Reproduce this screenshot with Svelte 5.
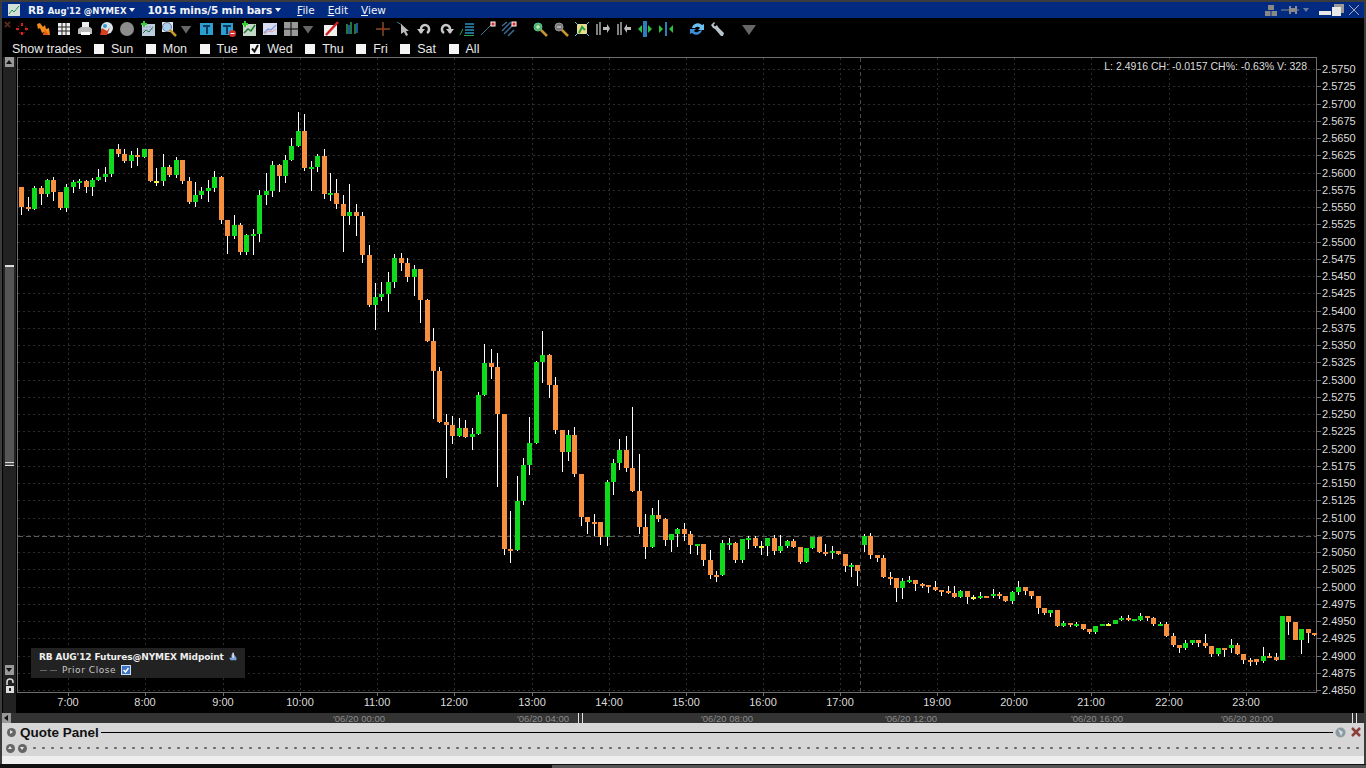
<script>
	// candles: colour, body top, body bottom, wick top, wick bottom (page pixels)
	const raw = `o,187,207,187,215 o,207,209,197,211 g,188,209,186,210 o,188,194,186,205 g,180,194,179,197 o,180,192,177,201 o,192,208,192,210 g,187,208,184,212 g,182,187,180,193 g,181,183,179,189
o,181,187,180,193 g,180,187,178,196 g,177,180,169,181 g,174,177,167,182 g,149,174,149,177 o,149,154,144,157 o,154,161,149,163 g,155,161,151,168 o,155,157,148,166 g,149,157,149,158
o,149,181,149,182 y,181,183,168,186 g,167,181,154,186 o,167,175,165,177 g,160,175,157,178 o,160,181,160,184 o,181,202,177,204 g,195,202,182,207 g,191,195,187,199 g,188,191,180,202
g,177,188,171,192 o,177,220,176,224 o,220,236,220,254 g,225,236,215,239 o,225,252,223,255 g,235,252,234,255 g,234,236,229,255 g,195,234,190,242 g,191,195,173,205 g,165,191,161,197
o,165,176,164,192 g,160,176,155,183 g,146,160,138,161 g,131,146,112,147 o,131,168,114,171 g,167,169,161,191 g,156,167,154,172 o,156,194,149,199 g,193,195,173,201 o,193,204,179,209
o,204,216,195,252 g,212,216,184,225 o,212,216,204,236 o,216,255,212,263 o,255,305,245,307 g,297,305,283,330 g,294,297,282,301 g,282,294,272,312 g,258,282,254,288 o,258,263,253,271
o,263,277,258,282 g,269,277,265,296 o,269,300,269,323 o,300,341,299,342 o,341,371,328,419 o,371,422,367,423 o,422,425,414,478 o,425,436,416,444 g,428,436,418,437 o,428,437,420,438
g,434,437,428,450 g,395,434,392,435 g,363,395,344,396 o,363,367,349,379 o,367,414,353,487 o,414,549,414,555 o,549,551,511,563 g,501,550,476,551 g,465,501,458,505 g,443,465,417,475
g,362,443,361,444 g,355,362,331,383 o,355,385,354,398 o,385,430,377,434 o,430,452,430,472 g,435,452,430,461 o,435,474,427,477 o,474,517,474,526 o,517,522,517,534 o,522,524,514,536
o,522,537,522,545 g,482,537,480,546 g,463,482,459,495 g,450,463,439,470 o,450,468,436,472 o,468,491,407,492 o,491,527,454,534 o,527,547,514,559 g,515,547,508,548 o,515,519,500,522
o,519,540,518,546 g,534,540,534,552 g,529,534,528,547 o,529,534,523,541 o,534,545,531,554 g,544,546,544,555 o,544,560,544,566 o,560,575,550,579 o,575,577,571,582 g,543,575,540,576
g,543,545,538,550 o,543,560,542,563 g,539,560,539,563 g,538,540,536,549 o,538,546,536,548 y,546,548,541,555 g,538,546,538,556 o,538,551,535,555 g,546,551,535,553 g,541,546,540,548
o,541,547,539,548 o,547,562,547,564 g,548,562,548,563 g,537,548,537,549 o,537,552,537,553 o,552,554,544,556 g,551,553,546,559 o,551,554,551,555 o,554,566,554,572 g,565,567,563,577
o,565,571,565,586 g,536,545,534,552 o,536,555,533,559 o,555,558,555,562 o,558,577,555,578 o,577,579,572,585 o,578,588,578,602 g,581,588,578,599 g,580,582,576,583 o,580,584,580,591
o,584,586,583,588 o,585,587,585,593 o,587,590,581,591 o,590,592,590,596 o,591,593,586,594 o,593,597,586,598 g,591,597,590,598 o,591,597,591,604 y,597,599,595,600 g,596,598,592,599
o,596,598,596,598 g,594,596,589,598 o,594,596,592,599 o,596,601,596,602 g,592,601,591,604 g,587,592,581,595 o,587,591,587,595 o,591,596,591,599 o,596,608,596,614 o,608,613,608,615
g,610,613,610,617 o,610,626,610,627 g,623,626,621,627 o,623,625,623,627 g,624,626,622,627 o,624,629,624,630 o,629,632,629,634 g,626,632,626,634 g,624,626,624,626 y,624,626,623,626
g,620,624,620,624 g,618,620,616,621 o,618,620,615,621 g,619,621,619,621 g,616,620,613,621 o,616,618,616,621 o,618,624,617,626 g,624,626,622,626 o,624,636,622,637 o,636,645,633,647
o,645,648,645,653 g,643,648,640,650 g,640,643,640,645 o,640,643,640,647 o,643,646,634,648 o,646,654,646,657 g,648,654,648,656 o,648,650,648,657 g,645,648,639,653 o,645,654,643,655
o,654,660,654,664 o,660,662,658,666 o,659,662,659,665 g,656,661,647,663 o,656,658,653,658 o,657,660,653,661 g,616,660,616,660 o,616,622,616,635 o,622,640,622,640 g,629,640,629,654
o,629,633,629,643 o,633,635,633,636`;

	const colors = { o: '#f6903f', g: '#0fdb1c', y: '#f2f04a' };
	const candles = raw.trim().split(/\s+/).map((s, i) => {
		const p = s.split(',');
		return {
			x: Math.round(21.3 + i * 6.432) - 2,
			color: colors[p[0]],
			top: +p[1],
			bottom: +p[2],
			wickTop: +p[3],
			wickBottom: +p[4]
		};
	});

	const prices = [];
	for (let i = 0; i <= 36; i++) prices.push({ label: (2.575 - i * 0.0025).toFixed(4), y: Math.round(69 + i * 17.25) });

	const hours = [
		['7:00', 68], ['8:00', 145], ['9:00', 223], ['10:00', 300], ['11:00', 377], ['12:00', 454], ['13:00', 532],
		['14:00', 609], ['15:00', 686], ['16:00', 763], ['17:00', 840], ['19:00', 937], ['20:00', 1014],
		['21:00', 1091], ['22:00', 1169], ['23:00', 1246]
	];

	const days = [
		{ name: 'Sun' }, { name: 'Mon' }, { name: 'Tue' }, { name: 'Wed', on: true },
		{ name: 'Thu' }, { name: 'Fri' }, { name: 'Sat' }, { name: 'All' }
	];

	const dates = ['06/20 00:00', '06/20 04:00', '06/20 08:00', '06/20 12:00', '06/20 16:00', '06/20 20:00'];

	const tri = '<path d="M1 4h14l-7 10z" fill="#666"/>';
	const tools = [
		{ c: 'xmark', s: '<path d="M1 1l6 6M7 1l-6 6" stroke="#5a2a20" stroke-width="2"/>' },
		{ s: '<path d="M8 2v3M8 11v3M2 8h3M11 8h3" stroke="#d22" stroke-width="2"/><circle cx="8" cy="8" r="4.5" fill="none" stroke="#922" stroke-dasharray="2 2"/>' },
		{ s: '<path d="M2 3l3-1 3 4 2-2 1 4 3-1 1 7H8l1-3-2 1-2-5-2 1z" fill="#f58a1f"/><path d="M10 9l4 5H8z" fill="#e65a10"/>' },
		{ s: '<rect x="2" y="2" width="12" height="12" fill="#eee"/><path d="M6 2v12M10 2v12M2 6h12M2 10h12" stroke="#222"/>' },
		{ s: '<rect x="5" y="1" width="7" height="6" fill="#eee"/><path d="M1 8l3-2h9l2 2v5H1z" fill="#bbb"/><rect x="4" y="11" width="9" height="3" fill="#fff"/>' },
		{ s: '<circle cx="9" cy="7" r="6" fill="#d8e4ec"/><path d="M2 14l2-7 5 3 3-4-3 8z" fill="#d8401c"/><circle cx="7" cy="5" r="2" fill="#39c"/>' },
		{ s: '<circle cx="8" cy="8" r="7" fill="#8c8c8c"/>' },
		{ s: '<rect x="2" y="3" width="13" height="12" fill="#bcd"/><path d="M3 12l3-3 3 2 4-5" stroke="#264" fill="none"/><path d="M4 0v6M1 3h6" stroke="#3c3" stroke-width="2"/><path d="M3 6h10M3 9h10" stroke="#8ab" stroke-dasharray="2 1"/>' },
		{ s: '<rect x="1" y="1" width="11" height="10" fill="#dbe8f5"/><circle cx="6" cy="6" r="4.5" fill="#a8d0f0" stroke="#778"/><path d="M9 9l6 6" stroke="#c8942c" stroke-width="2.5"/>' },
		{ c: 'tri', s: tri },
		{ s: '<rect x="1" y="2" width="13" height="12" fill="#2c9fd0"/><path d="M4 4h7v2H9v7H7V6H4z" fill="#0b3a5c"/>' },
		{ s: '<rect x="1" y="2" width="12" height="12" fill="#2c9fd0"/><path d="M3 4h8v2H8v7H6V6H3z" fill="#0b3a5c"/><circle cx="12.500" cy="12.500" r="3.5" fill="#d6322c"/><path d="M10.500 12.500h4" stroke="#fff"/>' },
		{ s: '<rect x="2" y="3" width="13" height="12" fill="#c4d8c8"/><path d="M3 12l4-4 3 2 4-6" stroke="#273" stroke-width="1.5" fill="none"/><path d="M4 0v6M1 3h6" stroke="#3c3" stroke-width="2"/>' },
		{ s: '<rect x="1" y="2" width="14" height="12" fill="#d8dcf0"/><path d="M2 12l4-4 3 1 5-5" stroke="#88a0e0" stroke-width="1.5" fill="none"/><path d="M2 13l5-3 3 1 4-3" stroke="#e8a0a0" fill="none"/>' },
		{ s: '<path d="M1 1h6.500v6.500H1zM8.500 1H15v6.500H8.500zM1 8.500h6.500V15H1zM8.500 8.500H15V15H8.500z" fill="#999"/>' },
		{ c: 'tri', s: tri },
		{ c: 'nudge', s: '<rect x="1" y="4" width="13" height="11" fill="#f0f0f0"/><path d="M3 14L15 1" stroke="#d02020" stroke-width="2.5"/>' },
		{ s: '<path d="M3 3v10M7 1v12M11 3v10" stroke="#2c9f50" stroke-width="1.5"/><path d="M5 4v9M13 2v10" stroke="#2c6cd0" stroke-width="1.5"/>' },
		{ c: 'wide', s: '<path d="M8 1v14M1 8h14" stroke="#5c3c1c" stroke-width="2"/><path d="M6 8h4M8 6v4" stroke="#8c2c1c" stroke-width="2"/>' },
		{ s: '<path d="M1 1l5 3" stroke="#4c7c90"/><path d="M5 3v10l3-2 2 4 2-1-2-4h3z" fill="#bbb"/>' },
		{ s: '<path d="M4 12V8a4 4 0 0 1 8 0 4 4 0 0 1-2 4" stroke="#c8c8c8" stroke-width="2.500" fill="none"/><path d="M0 8l4 5 4-5z" fill="#c8c8c8"/>' },
		{ s: '<path d="M12 12V8a4 4 0 0 0-8 0 4 4 0 0 0 2 4" stroke="#c8c8c8" stroke-width="2.500" fill="none"/><path d="M16 8l-4 5-4-5z" fill="#c8c8c8"/>' },
		{ s: '<path d="M1 14l3-6" stroke="#2c9f50"/><path d="M6 3h9M6 6h9M6 9h9M6 12h9" stroke="#2c8fc0" stroke-width="1.5"/><path d="M5 14.500h10" stroke="#2c9f50"/>' },
		{ s: '<path d="M1 14L12 3" stroke="#46708c"/><rect x="11" y="1" width="4" height="4" fill="#e02c2c" stroke="#fff"/>' },
		{ s: '<path d="M1 5l5-4M1 10l9-9M3 13l9-9M7 15l6-6" stroke="#3c6c94" stroke-width="1.5"/><rect x="11" y="1" width="4" height="4" fill="#e02c2c" stroke="#fff"/>' },
		{ c: 'wide', s: '<circle cx="6" cy="6" r="4" fill="#5cac6c" stroke="#4c8"/><path d="M4 6h4M6 4v4" stroke="#dfd"/><path d="M9 9l6 6" stroke="#c8942c" stroke-width="2.5"/>' },
		{ s: '<circle cx="6" cy="6" r="4" fill="#777" stroke="#999"/><path d="M4 6h4" stroke="#eee"/><path d="M9 9l6 6" stroke="#c8942c" stroke-width="2.5"/>' },
		{ s: '<rect x="3" y="3" width="10" height="10" fill="#e8dc8c"/><path d="M5 12l3-6 3 3" stroke="#2c9f40" stroke-width="2" fill="none"/><path d="M1 1l3 3M15 1l-3 3M1 15l3-3M15 15l-3-3" stroke="#6cc0e0"/>' },
		{ s: '<path d="M2 3v11M5 1v13" stroke="#aaa" stroke-width="1.5"/><path d="M8 6h4V3l3 4.500-3 4.500V9H8z" fill="#bbb"/>' },
		{ s: '<path d="M2 3v11M5 1v13" stroke="#aaa" stroke-width="1.500"/><path d="M15 6h-4V3L8 7.500l3 4.500V9h4z" fill="#bbb"/>' },
		{ s: '<rect x="6" y="0" width="4" height="16" fill="#2c7cc0"/><path d="M5 4v8L1 8zM11 4v8l4-4z" fill="#2cc040"/>' },
		{ s: '<rect x="7" y="1" width="2" height="14" fill="#2c7cc0"/><path d="M1 4v8l4-4zM15 4v8l-4-4z" fill="#2cc040"/>' },
		{ c: 'wide', s: '<path d="M3 7a6 6 0 0 1 10-3l2-1v6h-6l2-2a3 3 0 0 0-5 0z" fill="#6cc0f0"/><path d="M13 9a6 6 0 0 1-10 3l-2 1V8h6l-2 2a3 3 0 0 0 5 0z" fill="#3c8cdc"/>' },
		{ s: '<path d="M1 4l3-3 1 1-1.500 2L5 5.500 7 4l1 2 6 6-1 3h-2L5 8 3 7z" fill="#b8c4cc"/>' },
		{ c: 'wide', s: tri }
	];
</script>

<div class="window">
	<header class="titlebar">
		<svg class="logo" viewBox="0 0 12 12"><rect width="12" height="12" fill="#cfe0d8" /><path d="M1 10l3-4 2 2 5-6" stroke="#2c8f50" fill="none" /></svg>
		<span class="symbol">RB <small>Aug'12 @NYMEX</small></span>
		<span class="caret"></span>
		<span class="period">1015 mins/5 min bars</span>
		<span class="caret"></span>
		<nav>
			<span><u>F</u>ile</span>
			<span><u>E</u>dit</span>
			<span><u>V</u>iew</span>
		</nav>
		<div class="winctl">
			<svg width="12" height="13" viewBox="0 0 12 13"><path d="M3 1h6v5H3zM0 7h5.500v5H0zM6.500 7H12v5H6.500z" fill="#888" /></svg>
			<svg width="18" height="8" viewBox="0 0 18 8"><path d="M0 4h8M16 4h2" stroke="#8a8a8a" /><path d="M8 0h2v2h4V0h2v8h-2V6h-4v2H8z" fill="#8a8a8a" /></svg>
			<svg class="pinarrow" width="6" height="4" viewBox="0 0 6 4"><path d="M0 0h6L3 4z" fill="#6a7a9a" /></svg>
			<svg class="min" width="12" height="4" viewBox="0 0 12 4"><rect width="12" height="4" fill="#e8e8e8" /></svg>
			<svg width="12" height="12" viewBox="0 0 12 12"><rect x="2" width="10" height="9" fill="#999" /><rect y="3" width="9" height="9" fill="#e8e8e8" /></svg>
			<svg class="close" width="10" height="10" viewBox="0 0 10 10"><path d="M0 0l10 10M10 0L0 10" stroke="#aab" /></svg>
		</div>
	</header>

	<div class="toolbar">
		{#each tools as t}
			<svg class="tool {t.c ?? ''}" viewBox={t.c === 'xmark' ? '0 0 8 8' : '0 0 16 16'}>{@html t.s}</svg>
		{/each}
	</div>

	<div class="trades">
		<span class="trades-label">Show trades</span>
		{#each days as d}
			<label class="day">
				<span class="box">
					{#if d.on}
						<svg viewBox="0 0 10 10"><path d="M2 4.500l2.500 3L8 1" stroke="#111" stroke-width="2" fill="none" /></svg>
					{/if}
				</span>
				{d.name}
			</label>
		{/each}
	</div>

	<div class="main">
		<aside class="vscroll">
			<span class="sbtn up"></span>
			<div class="track"><div class="thumb"></div></div>
			<span class="sbtn down"></span>
			<svg class="lock" width="10" height="15" viewBox="0 0 10 15">
				<path d="M2 7V4a3 3 0 0 1 6 0v1" stroke="#ddd" stroke-width="1.500" fill="none" />
				<rect x="1" y="8" width="8" height="7" fill="#ddd" />
				<rect x="4" y="10" width="2" height="3" fill="#222" />
			</svg>
		</aside>

		<div class="chart">
			<svg class="plot" width="1347" height="656" viewBox="17 57 1347 656" shape-rendering="crispEdges">
				{#each prices as p}
					<line x1="18" x2="1317" y1={p.y + 0.5} y2={p.y + 0.5} class="grid" />
					<line x1="1317" x2="1321" y1={p.y + 0.5} y2={p.y + 0.5} class="frame" />
				{/each}
				{#each hours as h}
					<line x1={h[1] + 0.5} x2={h[1] + 0.5} y1="58" y2="692" class="grid" />
					<line x1={h[1] + 0.5} x2={h[1] + 0.5} y1="692" y2="696" class="frame" />
				{/each}
				<line x1="18" x2="1317" y1="536.500" y2="536.500" class="prior" />
				<line x1="860.500" x2="860.500" y1="58" y2="692" class="cross" />
				<path d="M17.500 692.500V57.500H1316.500V692.500Z" class="border" />

				{#each candles as c}
					<rect x={c.x + 2} y={c.wickTop} width="1" height={c.wickBottom - c.wickTop} fill="#fff" />
					<rect x={c.x} y={c.top} width="5" height={c.bottom - c.top} fill={c.color} />
				{/each}

				{#each prices as p}
					<text x="1322" y={p.y + 4} class="axis">{p.label}</text>
				{/each}
				{#each hours as h}
					<text x={h[1]} y="706" text-anchor="middle" class="axis">{h[0]}</text>
				{/each}
			</svg>

			<div class="info">L: 2.4916 CH: -0.0157 CH%: -0.63% V: 328</div>

			<div class="legend">
				<div class="legend-title">RB AUG'12 Futures@NYMEX Midpoint
					<svg width="10" height="10" viewBox="0 0 10 10"><path d="M3 2h3l3 4v3H2L0 6h3z" fill="#7ca4d8" /><path d="M4 0h2v6H4z" fill="#dde" /></svg>
				</div>
				<div class="legend-row">
					<span class="dash"></span>
					<span>Prior Close</span>
					<span class="legend-check"><svg viewBox="0 0 8 8"><path d="M1.500 4l2 2 3-4" stroke="#fff" stroke-width="1.500" fill="none" /></svg></span>
				</div>
			</div>
		</div>
	</div>

	<div class="hscroll">
		<span class="harrow left"></span>
		<div class="dates">
			{#each dates as d}
				<span class="date">'{d}</span>
			{/each}
		</div>
		<span class="handle first"></span>
		<span class="handle last"></span>
		<span class="harrow right"></span>
	</div>

	<section class="quote">
		<div class="quote-head">
			<span class="round play"></span>
			<h2>Quote Panel</h2>
			<span class="rule"></span>
			<svg width="11" height="11" viewBox="0 0 11 11"><circle cx="5.500" cy="5.500" r="5" fill="#8a9aa0" /><path d="M3 2l5 3-2 4z" fill="#d0dce0" /></svg>
			<svg class="quote-x" width="10" height="10" viewBox="0 0 10 10"><path d="M1 1l8 8M9 1l-8 8" stroke="#8a4038" stroke-width="2.500" /></svg>
		</div>
		<div class="quote-split">
			<span class="round up"></span>
			<span class="round down"></span>
			<span class="dots"></span>
		</div>
		<div class="quote-empty"></div>
	</section>
	<footer class="foot"><span class="foot-l"></span><span class="foot-r"></span></footer>
</div>

<style>
	:global(body) {
		background: #000;
		overflow: hidden;
	}

	.window {
		width: 1366px;
		height: 768px;
		box-sizing: border-box;
		padding: 2px 2px 0;
		background: #3c3c3c;
		display: flex;
		flex-direction: column;
		font-family: 'Liberation Sans', Arial, sans-serif;
		color: #e8e8e8;
	}

	/* title bar */
	.titlebar {
		height: 16px;
		background: #012a80;
		display: flex;
		align-items: center;
		color: #f0f2f8;
		font-family: 'DejaVu Sans', sans-serif;
		font-size: 11px;
	}

	.logo {
		width: 12px;
		height: 12px;
		margin-left: 6px;
	}

	.symbol {
		margin-left: 8px;
		font-weight: 700;
		font-size: 10.500px;
	}

	.symbol small {
		font-size: 8.500px;
	}

	.caret {
		width: 0;
		height: 0;
		margin-left: 3px;
		border: 3.500px solid transparent;
		border-top: 4px solid #f0f2f8;
		border-bottom: 0;
	}

	.period {
		margin-left: 12px;
		font-weight: 700;
		font-size: 10.500px;
		letter-spacing: -0.15px;
	}

	nav {
		display: flex;
		margin-left: 16px;
		gap: 13px;
		font-size: 10.500px;
	}

	.winctl {
		margin-left: auto;
		margin-right: 5px;
		display: flex;
		align-items: center;
		gap: 4px;
	}

	.pinarrow {
		margin-right: 6px;
		margin-left: 0;
	}

	.min {
		margin-top: 6px;
		margin-right: -3px;
	}

	.close {
		margin-left: 1px;
	}

	/* toolbar */
	.toolbar {
		height: 22px;
		background: #000;
		display: flex;
		align-items: center;
		gap: 5px;
		padding-left: 2px;
	}

	.tool {
		width: 16px;
		height: 16px;
		flex: none;
	}

	.tool.xmark {
		width: 7px;
		height: 7px;
		margin: -9px -2px 0 0;
	}

	.tool.tri {
		width: 12px;
		height: 12px;
		margin-left: -2px;
		margin-right: 2px;
	}

	.tool.nudge {
		margin-left: 2px;
	}

	.tool.wide {
		margin-left: 10px;
	}

	/* show trades */
	.trades {
		height: 17px;
		box-sizing: border-box;
		padding: 1px 0 0 10px;
		background: #000;
		display: flex;
		align-items: center;
		font-size: 12.500px;
	}

	.trades-label {
		width: 82px;
	}

	.day {
		display: flex;
		align-items: center;
		gap: 7px;
		margin-right: 12.500px;
	}

	.box {
		width: 10px;
		height: 10px;
		background: #f4f4f4;
		display: block;
	}

	.box svg {
		display: block;
	}

	/* chart */
	.main {
		height: 656px;
		display: flex;
		background: #000;
	}

	.vscroll {
		width: 13px;
		margin-left: 1px;
		background: #222;
		display: flex;
		flex-direction: column;
		align-items: center;
	}

	.sbtn {
		display: block;
		width: 9px;
		height: 10px;
		background: #999;
		position: relative;
		flex: none;
	}

	.sbtn::after {
		content: '';
		position: absolute;
		left: 1px;
		top: 3px;
		border: 3.500px solid transparent;
	}

	.sbtn.up::after {
		border-bottom: 4px solid #111;
		border-top: 0;
	}

	.sbtn.down::after {
		border-top: 4px solid #111;
		border-bottom: 0;
	}

	.track {
		flex: 1;
		width: 100%;
		padding-top: 198px;
		box-sizing: border-box;
	}

	.thumb {
		width: 9px;
		margin-left: 2px;
		height: 201px;
		box-sizing: border-box;
		background: #555;
		border-top: 2px solid #ddd;
		border-bottom: 4px double #ddd;
	}

	.lock {
		margin: 3px 0 20px;
		flex: none;
	}

	.chart {
		position: relative;
		flex: 1;
		margin-left: 1px;
	}

	.plot {
		display: block;
	}

	.grid {
		stroke: #2c2c2c;
		stroke-dasharray: 2 3;
	}

	.frame,
	.border {
		stroke: #6e6e6e;
		fill: none;
	}

	.prior {
		stroke: #5c5c5c;
		stroke-dasharray: 5 3;
	}

	.cross {
		stroke: #4c4c4c;
		stroke-dasharray: 4 3;
	}

	.axis {
		fill: #dcdcdc;
		font-size: 11px;
		font-family: 'Liberation Sans', Arial, sans-serif;
	}

	.info {
		position: absolute;
		top: 3px;
		right: 57px;
		font-size: 10.500px;
		color: #dcdcdc;
		white-space: nowrap;
	}

	.legend {
		position: absolute;
		left: 14px;
		top: 591px;
		width: 214px;
		height: 30px;
		box-sizing: border-box;
		padding: 2px 8px 0;
		background: #222;
		font-family: 'DejaVu Sans', sans-serif;
		font-size: 9px;
	}

	.legend-title {
		font-weight: 700;
		color: #eee;
		display: flex;
		align-items: center;
		gap: 5px;
		letter-spacing: -0.12px;
		white-space: nowrap;
		height: 14px;
	}

	.legend-row {
		display: flex;
		align-items: center;
		color: #c8c8c8;
		letter-spacing: 0.55px;
		height: 12px;
	}

	.dash {
		width: 17px;
		height: 1px;
		margin: 0 5px 0 1px;
		background: repeating-linear-gradient(90deg, #666 0 7px, transparent 7px 10px);
	}

	.legend-check {
		width: 8px;
		height: 8px;
		margin-left: 6px;
		background: #3c74c8;
		outline: 1px solid #cde;
	}

	.legend-check svg {
		display: block;
	}

	/* time scroller */
	.hscroll {
		height: 10px;
		background: #333;
		display: flex;
		align-items: center;
		position: relative;
	}

	.harrow {
		width: 9px;
		height: 10px;
		background: #999;
		position: relative;
		flex: none;
	}

	.harrow::after {
		content: '';
		position: absolute;
		top: 1.500px;
		left: 2px;
		border: 3.500px solid transparent;
	}

	.harrow.left::after {
		border-right: 4px solid #111;
		border-left: 0;
	}

	.harrow.right {
		margin-left: auto;
	}

	.harrow.right::after {
		border-left: 4px solid #111;
		border-right: 0;
	}

	.dates {
		display: flex;
		padding-left: 322px;
		color: #8c8c8c;
		font-size: 9.500px;
		white-space: nowrap;
	}

	.date {
		width: 184px;
	}

	.date:nth-child(4) {
		width: 186px;
	}

	.date:nth-child(5),
	.date:nth-child(6) {
		width: 150px;
	}

	.handle {
		position: absolute;
		top: 0;
		width: 3px;
		height: 10px;
		background: #333;
		border: 1px solid #e4e4e4;
		border-width: 0 1px;
	}

	.handle.first {
		left: 576px;
	}

	.handle.last {
		left: 1350px;
	}

	/* quote panel */
	.quote {
		background: #d6d6d6;
		color: #111;
	}

	.quote-head {
		height: 17px;
		box-sizing: border-box;
		padding: 1px 0 0 5px;
		display: flex;
		align-items: center;
	}

	.quote-head h2 {
		margin: 1px 0 0 4px;
		font-size: 13.500px;
		line-height: 15px;
		font-weight: 700;
		white-space: nowrap;
	}

	.rule {
		flex: 1;
		height: 1px;
		background: #000;
		margin: 0 2px 0 2px;
	}

	.quote-x {
		margin: 0 3px 0 5px;
	}

	.round {
		width: 9px;
		height: 9px;
		border-radius: 50%;
		background: #666;
		position: relative;
		flex: none;
	}

	.round::after {
		content: '';
		position: absolute;
		border: 2.500px solid transparent;
	}

	.round.play::after {
		left: 3px;
		top: 2px;
		border-left: 3px solid #e8e8e8;
		border-right: 0;
	}

	.round.up::after {
		left: 2px;
		top: 2px;
		border-bottom: 3px solid #e8e8e8;
		border-top: 0;
	}

	.round.down::after {
		left: 2px;
		top: 3px;
		border-top: 3px solid #e8e8e8;
		border-bottom: 0;
	}

	.quote-split {
		height: 16px;
		display: flex;
		align-items: center;
		gap: 3px;
		padding-left: 4px;
	}

	.dots {
		flex: 1;
		height: 4px;
		margin-left: 3px;
		background: radial-gradient(circle at 1.500px 2px, #666 1px, transparent 1.500px) 0 0 / 9px 4px repeat-x;
	}

	.quote-empty {
		height: 8px;
		background: #efefef;
	}

	.foot {
		flex: 1;
		display: flex;
		border-top: 1px solid #111;
		margin: 0 -2px;
	}

	.foot-l {
		width: 552px;
		background: #111;
	}

	.foot-r {
		flex: 1;
		background: #555;
	}
</style>
